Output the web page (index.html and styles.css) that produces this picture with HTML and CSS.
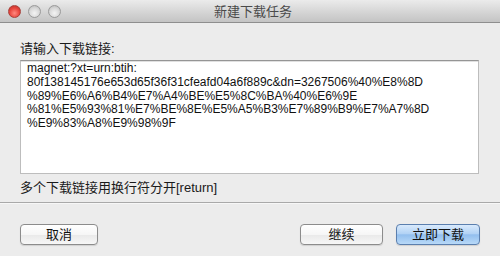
FILE: index.html
```html
<!DOCTYPE html>
<html>
<head>
<meta charset="utf-8">
<link rel="stylesheet" href="styles.css">
</head>
<body>
<div class="window">
  <div class="titlebar">
    <div class="lights">
      <span class="light red"></span>
      <span class="light grey"></span>
      <span class="light grey"></span>
    </div>
    <div class="title">新建下载任务</div>
  </div>
  <div class="content">
    <div class="label">请输入下载链接:</div>
    <div class="field">
      <div class="line">magnet:?xt=urn:btih:</div>
      <div class="line">80f138145176e653d65f36f31cfeafd04a6f889c&amp;dn=3267506%40%E8%8D</div>
      <div class="line">%89%E6%A6%B4%E7%A4%BE%E5%8C%BA%40%E6%9E</div>
      <div class="line">%81%E5%93%81%E7%BE%8E%E5%A5%B3%E7%89%B9%E7%A7%8D</div>
      <div class="line">%E9%83%A8%E9%98%9F</div>
    </div>
    <div class="hint">多个下载链接用换行符分开[return]</div>
  </div>
  <div class="separator"></div>
  <div class="buttons">
    <div class="btn">取消</div>
    <div class="spacer"></div>
    <div class="btn wide">继续</div>
    <div class="btn primary">立即下载</div>
  </div>
</div>
</body>
</html>
```

FILE: styles.css
```css
html, body {
  margin: 0;
  padding: 0;
}
body {
  width: 500px;
  height: 256px;
  overflow: hidden;
  background: #ececec;
  font-family: "Liberation Sans", "Noto Sans CJK SC", sans-serif;
  font-size: 13px;
  color: #1a1a1a;
}
.window {
  display: flex;
  flex-direction: column;
  height: 256px;
}
.titlebar {
  flex: none;
  display: flex;
  align-items: center;
  position: relative;
  background: linear-gradient(#ebebeb, #d3d3d3 60%, #c4c4c4);
  border-bottom: 1px solid #8e8e8e;
  box-sizing: border-box;
  height: 23px;
}
.lights {
  display: flex;
  gap: 7px;
  padding-left: 8px;
  padding-top: 1px;
}
.light {
  width: 13px;
  height: 13px;
  border-radius: 50%;
  box-sizing: border-box;
}
.light.red {
  background: radial-gradient(circle at 50% 65%, #ff8a80 0%, #e8453c 55%, #b3302a 100%);
  border: 1px solid #a8403a;
}
.light.grey {
  background: radial-gradient(circle at 50% 65%, #f4f4f4 0%, #d8d8d8 55%, #b5b5b5 100%);
  border: 1px solid #9a9a9a;
}
.title {
  position: absolute;
  left: 0;
  right: 0;
  top: 0;
  text-align: center;
  line-height: 23px;
  color: #4a4a4a;
  font-size: 13px;
  padding-left: 6px;
}
.content {
  padding: 17px 21px 0 20px;
}
.label {
  line-height: 17px;
  height: 17px;
  margin-bottom: 3px;
}
.field {
  background: #fff;
  border: 1px solid #bdbdbd;
  border-top-color: #959595;
  box-shadow: inset 0 1px 0 #e0e0e0;
  height: 114px;
  box-sizing: border-box;
  padding: 1px 6px 0 6px;
  font-size: 12px;
  line-height: 13.8px;
  color: #111;
}
.line {
  white-space: nowrap;
}
.hint {
  margin-top: 5px;
  line-height: 17px;
}
.separator {
  margin-top: 6px;
  height: 1px;
  background: #a9a9a9;
  border-bottom: 1px solid #f7f7f7;
}
.buttons {
  display: flex;
  padding: 20px 20px 0 20px;
  gap: 13px;
}
.spacer {
  flex: 1;
}
.btn {
  width: 78px;
  height: 21px;
  box-sizing: border-box;
  border: 1px solid #8c8c8c;
  border-radius: 4px;
  background: linear-gradient(#ffffff, #f6f6f6 50%, #e9e9e9 51%, #f7f7f7);
  text-align: center;
  line-height: 19px;
  color: #111;
  box-shadow: 0 1px 1px rgba(0,0,0,0.12);
}
.btn.wide {
  width: 83px;
}
.btn.primary {
  width: 84px;
  border-color: #5b7fae;
  background: linear-gradient(#d9eafc, #b3d3f5 45%, #93bfee 52%, #b8d9f8);
}
```
